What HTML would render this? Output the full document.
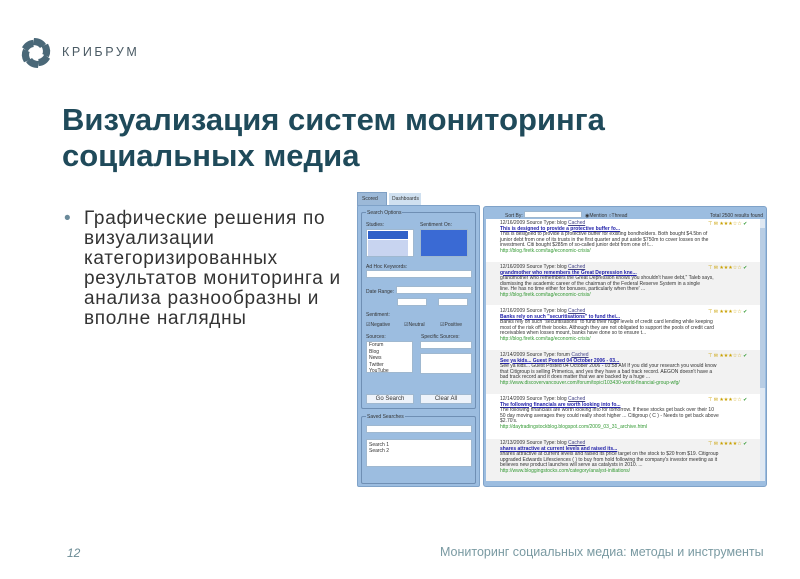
<!DOCTYPE html>
<html><head><meta charset="utf-8"><style>
*{margin:0;padding:0;box-sizing:border-box}
body{width:800px;height:579px;background:#fff;position:relative;overflow:hidden;font-family:"Liberation Sans",sans-serif}
.a{position:absolute}
.t{font-size:5px;color:#333;white-space:nowrap}
.box{background:#fff;border:1px solid #9fb8d0}
</style></head><body>
<svg class="a" style="left:20px;top:37px" width="32" height="32" viewBox="-16 -16 32 32">
<g fill="#4a6878">
<path d="M-2,-15 Q6,-15 10,-9 L4,-5 Q2,-8 -3,-8 Z"/>
<path transform="rotate(60)" d="M-2,-15 Q6,-15 10,-9 L4,-5 Q2,-8 -3,-8 Z"/>
<path transform="rotate(120)" d="M-2,-15 Q6,-15 10,-9 L4,-5 Q2,-8 -3,-8 Z"/>
<path transform="rotate(180)" d="M-2,-15 Q6,-15 10,-9 L4,-5 Q2,-8 -3,-8 Z"/>
<path transform="rotate(240)" d="M-2,-15 Q6,-15 10,-9 L4,-5 Q2,-8 -3,-8 Z"/>
<path transform="rotate(300)" d="M-2,-15 Q6,-15 10,-9 L4,-5 Q2,-8 -3,-8 Z"/>
</g></svg>
<div class="a" style="left:62px;top:45px;font-size:12.5px;letter-spacing:2.6px;color:#4a5a64">КРИБРУМ</div>
<div class="a" style="left:62px;top:102px;font-size:31px;font-weight:bold;color:#1f4a5a;line-height:36px;white-space:nowrap">Визуализация систем мониторинга<br>социальных медиа</div>
<div class="a" style="left:64px;top:209px;font-size:19px;line-height:20px;color:#6a8a9a">•</div>
<div class="a" style="left:84px;top:209px;font-size:19px;letter-spacing:0.7px;color:#333;line-height:20px;white-space:nowrap">Графические решения по<br>визуализации<br>категоризированных<br>результатов мониторинга и<br>анализа разнообразны и<br>вполне наглядны</div>
<div class="a" style="left:357px;top:192px;width:30px;height:14px;background:#9cb9d8;border:1px solid #7fa0c4"></div>
<div class="a t" style="left:362px;top:196px">Scored</div>
<div class="a" style="left:389px;top:193px;width:32px;height:13px;background:#cfe0f0"></div>
<div class="a t" style="left:392px;top:196px">Dashboards</div>
<div class="a" style="left:357px;top:205px;width:123px;height:282px;background:#9cbde0;border:1px solid #7fa2c8;border-radius:2px"></div>
<div class="a" style="left:361px;top:212px;width:115px;height:197px;border:1px solid #6f8fb4;border-radius:2px"></div>
<div class="a t" style="left:366px;top:210px;background:#9cbde0;padding:0 1px">Search Options</div>
<div class="a t" style="left:366px;top:222px">Studies:</div><div class="a t" style="left:420px;top:222px">Sentiment On:</div>
<div class="a box" style="left:366px;top:229px;width:48px;height:28px"><div style="background:#3060c8;height:8px;margin:1px;width:40px"></div><div style="background:#c8d4f0;height:16px;margin:1px;width:40px"></div></div>
<div class="a" style="left:420px;top:229px;width:48px;height:28px;background:#3a6ad4;border:1px solid #9fb8d0"></div>
<div class="a t" style="left:366px;top:264px">Ad Hoc Keywords:</div>
<div class="a box" style="left:366px;top:270px;width:106px;height:8px"></div>
<div class="a t" style="left:366px;top:289px">Date Range:</div>
<div class="a box" style="left:396px;top:286px;width:76px;height:8px"></div>
<div class="a box" style="left:397px;top:298px;width:30px;height:8px"></div>
<div class="a box" style="left:438px;top:298px;width:30px;height:8px"></div>
<div class="a t" style="left:366px;top:312px">Sentiment:</div>
<div class="a t" style="left:366px;top:322px">☑Negative</div><div class="a t" style="left:404px;top:322px">☑Neutral</div><div class="a t" style="left:440px;top:322px">☑Positive</div>
<div class="a t" style="left:366px;top:334px">Sources:</div><div class="a t" style="left:421px;top:334px">Specific Sources:</div>
<div class="a box t" style="left:366px;top:341px;width:47px;height:32px;line-height:6.5px;padding-left:2px">Forum<br>Blog<br>News<br>Twitter<br>YouTube</div>
<div class="a box" style="left:420px;top:341px;width:52px;height:8px"></div>
<div class="a box" style="left:420px;top:353px;width:52px;height:21px"></div>
<div class="a box t" style="left:366px;top:394px;width:48px;height:10px;text-align:center;line-height:8px;background:#eef3fa;font-size:6px">Go Search</div>
<div class="a box t" style="left:420px;top:394px;width:52px;height:10px;text-align:center;line-height:8px;background:#eef3fa;font-size:6px">Clear All</div>
<div class="a" style="left:361px;top:416px;width:115px;height:68px;border:1px solid #6f8fb4;border-radius:2px"></div>
<div class="a t" style="left:366px;top:414px;background:#9cbde0;padding:0 1px">Saved Searches</div>
<div class="a box" style="left:366px;top:425px;width:106px;height:8px"></div>
<div class="a box t" style="left:366px;top:439px;width:106px;height:28px;padding:2px;line-height:6px">Search 1<br>Search 2</div>
<div class="a" style="left:483px;top:206px;width:284px;height:281px;background:#9cbde0;border:1px solid #7fa2c8;border-radius:3px"></div>
<div class="a t" style="left:505px;top:213px">Sort By:</div>
<div class="a box" style="left:524px;top:211px;width:58px;height:7px"></div>
<div class="a t" style="left:585px;top:213px">◉Mention ○Thread</div>
<div class="a t" style="left:710px;top:213px">Total 2500 results found</div>
<div class="a" style="left:486px;top:219px;width:274px;height:262px;background:#fff"></div>
<div class="a" style="left:760px;top:219px;width:5px;height:262px;background:#dfe8f2"></div>
<div class="a" style="left:760px;top:228px;width:5px;height:160px;background:#b8cde4"></div>
<div class="a" style="left:486px;top:262px;width:274px;height:43px;background:#f2f2f2"></div>
<div class="a" style="left:486px;top:350px;width:274px;height:44px;background:#f2f2f2"></div>
<div class="a" style="left:486px;top:439px;width:274px;height:42px;background:#f2f2f2"></div>
<div class="a t" style="left:500px;top:221px;line-height:5.5px">12/16/2009 Source Type: blog <u style="color:#448">Cached</u><br><b style="color:#22a;text-decoration:underline">This is designed to provide a protective buffer fo...</b><br>This is designed to provide a protective buffer for existing bondholders. Both bought $4.5bn of<br>junior debt from one of its trusts in the first quarter and put aside $750m to cover losses on the<br>investment. Citi bought $285m of so-called junior debt from one of t...<br><span style="color:#393">http://blog.firetk.com/tag/economic-crisis/</span></div>
<div class="a t" style="left:500px;top:265px;line-height:5.5px">12/16/2009 Source Type: blog <u style="color:#448">Cached</u><br><b style="color:#22a;text-decoration:underline">grandmother who remembers the Great Depression kne...</b><br>grandmother who remembers the Great Depression knows you shouldn't have debt," Taleb says,<br>dismissing the academic career of the chairman of the Federal Reserve System in a single<br>line. He has no time either for bonuses, particularly when there' ...<br><span style="color:#393">http://blog.firetk.com/tag/economic-crisis/</span></div>
<div class="a t" style="left:500px;top:309px;line-height:5.5px">12/16/2009 Source Type: blog <u style="color:#448">Cached</u><br><b style="color:#22a;text-decoration:underline">Banks rely on such "securitisations" to fund thei...</b><br>Banks rely on such "securitisations" to fund their huge levels of credit card lending while keeping<br>most of the risk off their books. Although they are not obligated to support the pools of credit card<br>receivables when losses mount, banks have done so to ensure t...<br><span style="color:#393">http://blog.firetk.com/tag/economic-crisis/</span></div>
<div class="a t" style="left:500px;top:353px;line-height:5.5px">12/14/2009 Source Type: forum <u style="color:#448">Cached</u><br><b style="color:#22a;text-decoration:underline">See ya kids... Guest Posted 04 October 2006 - 03...</b><br>See ya kids... Guest Posted 04 October 2006 - 03:58 AM If you did your research you would know<br>that Citigroup is selling Primerica, and yes they have a bad track record. AEGON doesn't have a<br>bad track record and it does matter that we are backed by a huge ...<br><span style="color:#393">http://www.discovervancouver.com/forum/topic/103430-world-financial-group-wfg/</span></div>
<div class="a t" style="left:500px;top:397px;line-height:5.5px">12/14/2009 Source Type: blog <u style="color:#448">Cached</u><br><b style="color:#22a;text-decoration:underline">The following financials are worth looking into fo...</b><br>The following financials are worth looking into for tomorrow. If these stocks get back over their 10<br>50 day moving averages they could really shoot higher ... Citigroup ( C ) - Needs to get back above<br>$2.70's.<br><span style="color:#393">http://daytradingstockblog.blogspot.com/2009_03_31_archive.html</span></div>
<div class="a t" style="left:500px;top:441px;line-height:5.5px">12/13/2009 Source Type: blog <u style="color:#448">Cached</u><br><b style="color:#22a;text-decoration:underline">shares attractive at current levels and raised its...</b><br>shares attractive at current levels and raised its price target on the stock to $20 from $19. Citigroup<br>upgraded Edwards Lifesciences ( ) to buy from hold following the company's investor meeting as it<br>believes new product launches will serve as catalysts in 2010. ...<br><span style="color:#393">http://www.bloggingstocks.com/category/analyst-initiations/</span></div>
<div class="a t" style="left:708px;top:221px;color:#c9a000">⊤ ✉ ★★★☆☆ <span style="color:#393">✔</span></div>
<div class="a t" style="left:708px;top:265px;color:#c9a000">⊤ ✉ ★★★☆☆ <span style="color:#393">✔</span></div>
<div class="a t" style="left:708px;top:309px;color:#c9a000">⊤ ✉ ★★★☆☆ <span style="color:#393">✔</span></div>
<div class="a t" style="left:708px;top:353px;color:#c9a000">⊤ ✉ ★★★☆☆ <span style="color:#393">✔</span></div>
<div class="a t" style="left:708px;top:397px;color:#c9a000">⊤ ✉ ★★★☆☆ <span style="color:#393">✔</span></div>
<div class="a t" style="left:708px;top:441px;color:#c9a000">⊤ ✉ ★★★★☆ <span style="color:#393">✔</span></div>
<div class="a" style="left:67px;top:546px;font-size:12px;font-style:italic;color:#6a8a94">12</div>
<div class="a" style="left:440px;top:545px;font-size:12.5px;color:#7a9aa2">Мониторинг социальных медиа: методы и инструменты</div>
</body></html>
